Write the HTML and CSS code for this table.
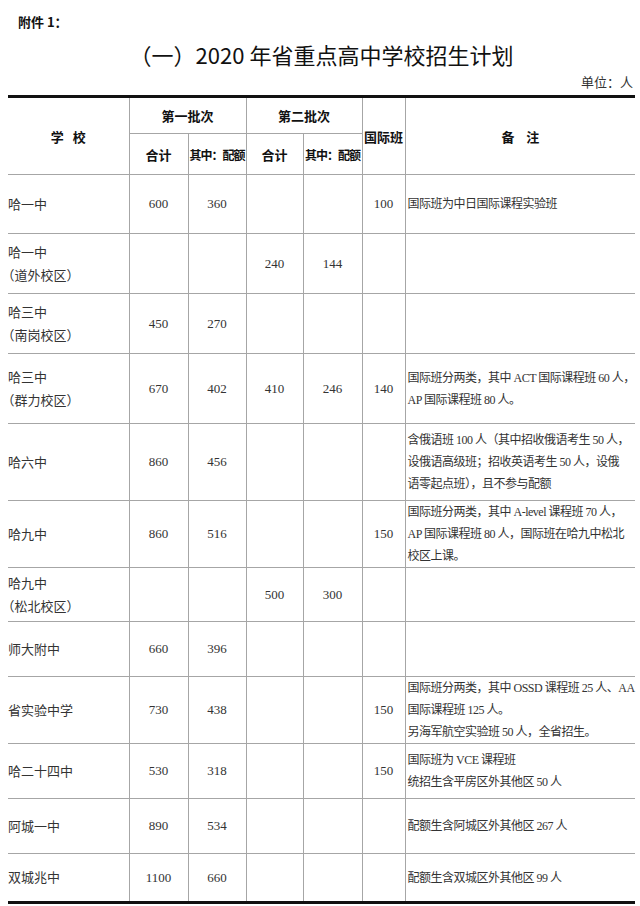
FILE: index.html
```html
<!DOCTYPE html>
<html lang="zh-CN">
<head>
<meta charset="utf-8">
<title>2020年省重点高中学校招生计划</title>
<link rel="stylesheet" href="styles.css">
</head>
<body>
<div class="page">
  <div class="attach">附件 1：</div>
  <h1 class="title">（一）2020 年省重点高中学校招生计划</h1>
  <div class="unit">单位：人</div>
  <table class="plan">
    <colgroup>
      <col class="c-school">
      <col class="c-num">
      <col class="c-num2">
      <col class="c-num3">
      <col class="c-num4">
      <col class="c-intl">
      <col class="c-note">
    </colgroup>
    <thead>
      <tr class="hr1">
        <th rowspan="2" class="first">学&nbsp;&nbsp;&nbsp;校</th>
        <th colspan="2">第一批次</th>
        <th colspan="2">第二批次</th>
        <th rowspan="2" class="intl">国际班</th>
        <th rowspan="2" class="last">备&nbsp;&nbsp;&nbsp;&nbsp;注</th>
      </tr>
      <tr class="hr2">
        <th>合计</th>
        <th class="quota">其中：配额</th>
        <th>合计</th>
        <th class="quota">其中：配额</th>
      </tr>
    </thead>
    <tbody>
      <tr class="r59">
        <td class="school">哈一中</td><td>600</td><td>360</td><td></td><td></td><td>100</td>
        <td class="note">国际班为中日国际课程实验班</td>
      </tr>
      <tr class="r60">
        <td class="school">哈一中<br>（道外校区）</td><td></td><td></td><td>240</td><td>144</td><td></td>
        <td class="note"></td>
      </tr>
      <tr class="r60">
        <td class="school">哈三中<br>（南岗校区）</td><td>450</td><td>270</td><td></td><td></td><td></td>
        <td class="note"></td>
      </tr>
      <tr class="r70">
        <td class="school">哈三中<br>（群力校区）</td><td>670</td><td>402</td><td>410</td><td>246</td><td>140</td>
        <td class="note">国际班分两类，其中 ACT 国际课程班 60 人，<br>AP 国际课程班 80 人。</td>
      </tr>
      <tr class="r77">
        <td class="school">哈六中</td><td>860</td><td>456</td><td></td><td></td><td></td>
        <td class="note">含俄语班 100 人（其中招收俄语考生 50 人，<br>设俄语高级班；招收英语考生 50 人，设俄<br>语零起点班），且不参与配额</td>
      </tr>
      <tr class="r65">
        <td class="school">哈九中</td><td>860</td><td>516</td><td></td><td></td><td>150</td>
        <td class="note">国际班分两类，其中 A-level 课程班 70 人，<br>AP 国际课程班 80 人，国际班在哈九中松北<br>校区上课。</td>
      </tr>
      <tr class="r54">
        <td class="school">哈九中<br>（松北校区）</td><td></td><td></td><td>500</td><td>300</td><td></td>
        <td class="note"></td>
      </tr>
      <tr class="r55">
        <td class="school">师大附中</td><td>660</td><td>396</td><td></td><td></td><td></td>
        <td class="note"></td>
      </tr>
      <tr class="r66">
        <td class="school">省实验中学</td><td>730</td><td>438</td><td></td><td></td><td>150</td>
        <td class="note">国际班分两类，其中 OSSD 课程班 25 人、AA<br>国际课程班 125 人。<br>另海军航空实验班 50 人，全省招生。</td>
      </tr>
      <tr class="r55">
        <td class="school">哈二十四中</td><td>530</td><td>318</td><td></td><td></td><td>150</td>
        <td class="note">国际班为 VCE 课程班<br>统招生含平房区外其他区 50 人</td>
      </tr>
      <tr class="r55">
        <td class="school">阿城一中</td><td>890</td><td>534</td><td></td><td></td><td></td>
        <td class="note">配额生含阿城区外其他区 267 人</td>
      </tr>
      <tr class="r49 lastrow">
        <td class="school">双城兆中</td><td>1100</td><td>660</td><td></td><td></td><td></td>
        <td class="note">配额生含双城区外其他区 99 人</td>
      </tr>
    </tbody>
  </table>
</div>
</body>
</html>
```

FILE: styles.css
```css
html, body {
  margin: 0;
  padding: 0;
  background: #ffffff;
}

body {
  font-family: "Liberation Serif", "Noto Sans CJK SC", serif;
  color: #333333;
}

.page {
  width: 640px;
  padding: 0 5px 0 8px;
  box-sizing: border-box;
}

.attach {
  margin: 13px 0 0 10px;
  font-family: "Noto Sans CJK SC", sans-serif;
  font-weight: 700;
  font-size: 13px;
  line-height: 18px;
  color: #111111;
}

.title {
  margin: 9px 0 0 0;
  text-align: center;
  font-family: "Noto Sans CJK SC", sans-serif;
  font-weight: 400;
  font-size: 22px;
  line-height: 28px;
  color: #111111;
}

.unit {
  margin: 6px 2px 0 0;
  text-align: right;
  font-size: 13px;
  line-height: 18px;
  color: #333333;
}

.plan {
  width: 627px;
  margin-top: 3px;
  border-collapse: collapse;
  table-layout: fixed;
}

.c-school { width: 121px; }
.c-num { width: 59px; }
.c-num2 { width: 58px; }
.c-num3 { width: 57px; }
.c-num4 { width: 59px; }
.c-intl { width: 43px; }
.c-note { width: 230px; }

.plan th,
.plan td {
  border: 1px solid #a6a6a6;
  padding: 0;
  vertical-align: middle;
}

.plan th:first-child,
.plan td:first-child {
  border-left: none;
}

.plan th.last,
.plan td:last-child {
  border-right: none;
}

.plan thead tr.hr1 th {
  border-top: 3px solid #111111;
}

.plan th {
  font-family: "Noto Sans CJK SC", sans-serif;
  font-weight: 700;
  font-size: 13px;
  color: #111111;
  text-align: center;
  white-space: nowrap;
}

.hr1 { height: 37px; }
.hr2 { height: 41px; }

.plan th.quota {
  font-size: 12px;
  letter-spacing: -1px;
}

.plan td {
  font-size: 13px;
  text-align: center;
  color: #333333;
}

.plan td.school {
  text-align: left;
  padding-left: 0;
  line-height: 23px;
  font-feature-settings: "halt";
}

.plan td.note {
  text-align: left;
  padding-left: 2px;
  font-size: 12px;
  line-height: 22px;
  letter-spacing: -0.5px;
  white-space: nowrap;
}

.plan tr.lastrow td {
  border-bottom: 3px solid #111111;
}

.r49 { height: 49px; }
.r54 { height: 54px; }
.r55 { height: 55px; }
.r59 { height: 59px; }
.r60 { height: 60px; }
.r65 { height: 65px; }
.r66 { height: 66px; }
.r70 { height: 70px; }
.r77 { height: 77px; }
```
